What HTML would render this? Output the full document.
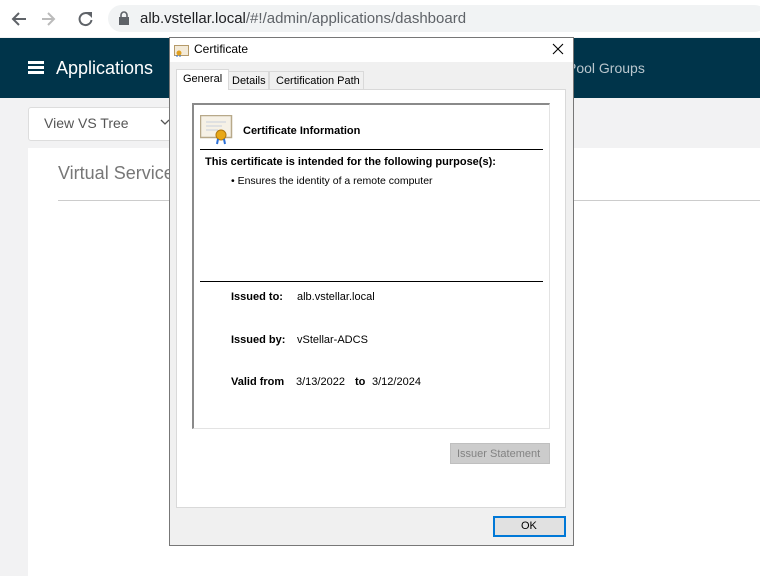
<!DOCTYPE html>
<html><head><meta charset="utf-8"><style>
*{margin:0;padding:0;box-sizing:border-box}
body{width:760px;height:576px;overflow:hidden;position:relative;background:#f2f2f3;font-family:"Liberation Sans",sans-serif}
.a{position:absolute}
.t{font-size:11px;color:#000;white-space:nowrap}
</style></head><body>
<div class="a" style="left:0;top:0;width:760px;height:37px;background:#fff"></div>
<div class="a" style="left:108px;top:5px;width:660px;height:27px;background:#f1f3f4;border-radius:14px"></div>
<svg class="a" style="left:10px;top:9px" width="90" height="20" viewBox="0 0 90 20">
<path d="M16 10H4M9 4L3 10l6 6" stroke="#5f6368" stroke-width="2" fill="none"/>
<path d="M44 10H32M38 4l6 6-6 6" stroke="#bbb" stroke-width="2" fill="none"/>
<path d="M80 6a6 6 0 1 0 1.5 5" stroke="#5f6368" stroke-width="2" fill="none"/><path d="M76 3h6v6z" fill="#5f6368"/>
</svg>
<svg class="a" style="left:118px;top:11px" width="12" height="14"><rect x="1" y="6" width="10" height="8" fill="#5f6368"/><path d="M3 6V4a3 3 0 0 1 6 0v2" stroke="#5f6368" stroke-width="1.6" fill="none"/></svg>
<div class="a" style="left:140px;top:10px;font-size:15px;color:#202124">alb.vstellar.local<span style="color:#5f6368">/#!/admin/applications/dashboard</span></div>
<div class="a" style="left:0;top:38px;width:760px;height:60px;background:#00344a"></div>
<div class="a" style="left:28px;top:61px;width:16px;height:3px;background:#fff;box-shadow:0 5px 0 #fff,0 10px 0 #fff"></div>
<div class="a" style="left:56px;top:58px;font-size:18px;color:#fff">Applications</div>
<div class="a" style="left:567px;top:60px;font-size:14px;color:#b9c6cd">Pool Groups</div>
<div class="a" style="left:28px;top:107px;width:160px;height:34px;background:#fff;border:1px solid #ddd;border-radius:3px"></div>
<div class="a" style="left:44px;top:115px;font-size:14px;color:#555">View VS Tree</div>
<svg class="a" style="left:160px;top:118px" width="10" height="8"><path d="M1 2l4 4 4-4" stroke="#555" stroke-width="1.3" fill="none"/></svg>
<div class="a" style="left:28px;top:148px;width:732px;height:428px;background:#fff"></div>
<div class="a" style="left:58px;top:163px;font-size:18px;color:#777">Virtual Service</div>
<div class="a" style="left:58px;top:200px;width:702px;height:1px;background:#ccc"></div>
<!-- dialog -->
<div class="a" style="left:169px;top:37px;width:405px;height:509px;background:#f0f0f0;border:1px solid #777"></div>
<div class="a" style="left:170px;top:38px;width:403px;height:24px;background:#fff"></div>
<svg class="a" style="left:174px;top:43px" width="16" height="14"><rect x="0.5" y="2.5" width="14" height="10" fill="#f3ead8" stroke="#b59a6a"/><circle cx="5" cy="10" r="2.5" fill="#e0a020"/><path d="M3 12v2M6 12v2" stroke="#3070d0"/></svg>
<div class="a t" style="left:194px;top:42px;font-size:12px">Certificate</div>
<svg class="a" style="left:552px;top:43px" width="12" height="12"><path d="M1 1l10 10M11 1L1 11" stroke="#000" stroke-width="1.1"/></svg>
<div class="a" style="left:176px;top:89px;width:390px;height:419px;background:#fff;border:1px solid #d9d9d9"></div>
<div class="a" style="left:228px;top:71px;width:41px;height:19px;background:#f0f0f0;border:1px solid #d9d9d9"></div>
<div class="a" style="left:269px;top:71px;width:95px;height:19px;background:#f0f0f0;border:1px solid #d9d9d9"></div>
<div class="a" style="left:176px;top:69px;width:53px;height:21px;background:#fff;border:1px solid #d9d9d9;border-bottom:none"></div>
<div class="a t" style="left:183px;top:73px">General</div>
<div class="a t" style="left:232px;top:75px">Details</div>
<div class="a t" style="left:276px;top:75px">Certification Path</div>
<div class="a" style="left:192px;top:103px;width:358px;height:326px;background:#fff;border:1px solid #e3e3e3;border-top:2px solid #8a8a8a;border-left:2px solid #8a8a8a"></div>
<svg class="a" style="left:200px;top:115px" width="33" height="30"><rect x="0.5" y="0.5" width="31" height="22" fill="#f6f1e6" stroke="#b8a98a" stroke-width="1.5"/><path d="M6 7h20M6 11h16M6 15h12" stroke="#c8d0dc"/><circle cx="21" cy="20" r="5" fill="#e8a818" stroke="#b07810"/><path d="M18 24l-1 5M24 24l1 5" stroke="#2b6fd6" stroke-width="2"/></svg>
<div class="a t" style="left:243px;top:125px;font-weight:bold">Certificate Information</div>
<div class="a" style="left:200px;top:149px;width:343px;height:1px;background:#000"></div>
<div class="a t" style="left:205px;top:156px;font-weight:bold">This certificate is intended for the following purpose(s):</div>
<div class="a t" style="left:231px;top:175px;font-size:10.5px">• Ensures the identity of a remote computer</div>
<div class="a" style="left:200px;top:281px;width:343px;height:1px;background:#000"></div>
<div class="a t" style="left:231px;top:291px;font-weight:bold">Issued to:</div>
<div class="a t" style="left:297px;top:291px">alb.vstellar.local</div>
<div class="a t" style="left:231px;top:334px;font-weight:bold">Issued by:</div>
<div class="a t" style="left:297px;top:334px">vStellar-ADCS</div>
<div class="a t" style="left:231px;top:376px;font-weight:bold">Valid from</div>
<div class="a t" style="left:296px;top:376px">3/13/2022</div>
<div class="a t" style="left:355px;top:376px;font-weight:bold">to</div>
<div class="a t" style="left:372px;top:376px">3/12/2024</div>
<div class="a" style="left:450px;top:443px;width:100px;height:21px;background:#cccccc;border:1px solid #bfbfbf"></div>
<div class="a t" style="left:457px;top:448px;color:#838383">Issuer Statement</div>
<div class="a" style="left:493px;top:516px;width:73px;height:21px;background:#e1e1e1;border:2px solid #0078d7"></div>
<div class="a t" style="left:521px;top:520px">OK</div>
</body></html>
